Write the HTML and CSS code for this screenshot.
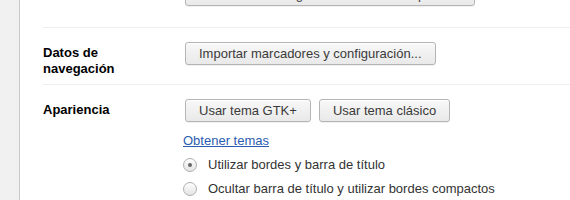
FILE: index.html
```html
<!DOCTYPE html>
<html lang="es">
<head>
  <meta charset="UTF-8">
  <link rel="stylesheet" href="styles.css">
  <title>Configuración</title>
</head>
<body>
  <div class="page">
    <div class="sidebar"></div>
    <div class="main">
      <section class="section first">
        <div class="label"></div>
        <div class="controls">
          <button class="btn">Administrar configuración de Autocompletar...</button>
        </div>
      </section>
      <section class="section">
        <div class="label">Datos de<br>navegación</div>
        <div class="controls">
          <button class="btn">Importar marcadores y configuración...</button>
        </div>
      </section>
      <section class="section">
        <div class="label">Apariencia</div>
        <div class="controls">
          <div class="btn-row">
            <button class="btn">Usar tema GTK+</button>
            <button class="btn">Usar tema clásico</button>
          </div>
          <a class="link" href="#">Obtener temas</a>
          <label class="radio"><span class="dot checked"></span>Utilizar bordes y barra de título</label>
          <label class="radio"><span class="dot"></span>Ocultar barra de título y utilizar bordes compactos</label>
        </div>
      </section>
    </div>
  </div>
</body>
</html>
```
FILE: styles.css
```css
body {
  margin: 0;
  background: #fff;
  font-family: 'Liberation Sans', Arial, sans-serif;
  font-size: 13px;
  color: #303030;
  overflow: hidden;
}

.page {
  display: flex;
  height: 200px;
}

.sidebar {
  width: 19px;
  background: #f1f1f1;
  border-right: 1px solid #c8c8c8;
  flex-shrink: 0;
}

.main {
  flex: 1;
  padding-left: 23px;
}

.section {
  display: flex;
  border-top: 1px solid #eeeeee;
  padding: 14px 0 7px;
}

.section.first {
  border-top: none;
  height: 27px;
  padding: 0;
  box-sizing: border-box;
}

.section.first .btn {
  margin-top: -17px;
}

.label {
  width: 142px;
  flex-shrink: 0;
  font-weight: bold;
  color: #000;
  line-height: 16px;
  padding-top: 3px;
}

.controls {
  display: flex;
  flex-direction: column;
  align-items: flex-start;
}

.btn-row {
  display: flex;
  gap: 8px;
}

.btn {
  height: 23px;
  padding: 0 13px;
  font-family: 'Liberation Sans', Arial, sans-serif;
  font-size: 13px;
  color: #3a3a3a;
  background: linear-gradient(#f8f8f8, #e9e9e9);
  border: 1px solid #b4b4b4;
  border-radius: 3px;
  box-shadow: 0 1px 0 rgba(0, 0, 0, 0.06), inset 0 1px 0 #fff;
}

.link {
  color: #2a5db0;
  margin: 10px 0 0 -2px;
  line-height: 17px;
}

.radio {
  display: flex;
  align-items: center;
  gap: 11px;
  margin-left: -2px;
  margin-top: 7px;
  line-height: 17px;
  color: #333;
}

.dot {
  width: 12px;
  height: 12px;
  border: 1px solid #b0b0b0;
  border-radius: 50%;
  background: linear-gradient(#fdfdfd, #e4e4e4);
  display: flex;
  align-items: center;
  justify-content: center;
}

.dot.checked::after {
  content: "";
  width: 4px;
  height: 4px;
  border-radius: 50%;
  background: #666;
}
```
